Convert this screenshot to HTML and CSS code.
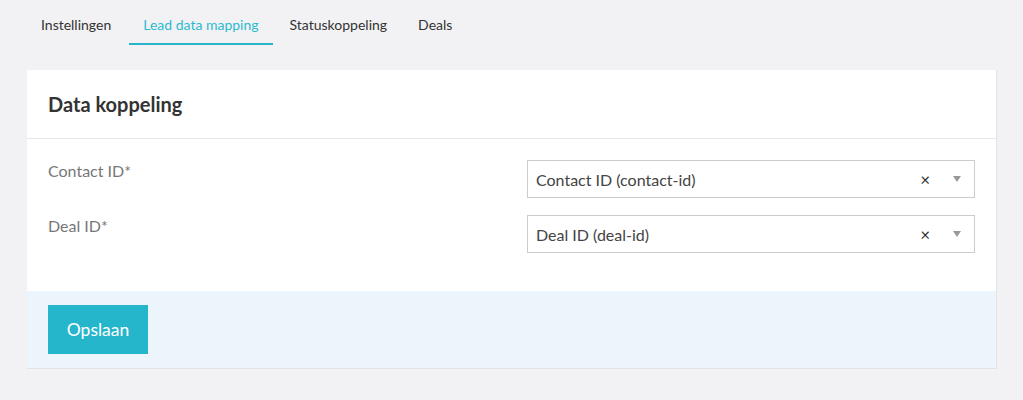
FILE: index.html
```html
<!DOCTYPE html>
<html lang="nl">
<head>
	<meta charset="UTF-8">
	<title>Lead data mapping</title>
	<link rel="stylesheet" href="styles.css">
</head>
<body>
	<ul class="tabs">
		<li class="tab">Instellingen</li>
		<li class="tab active">Lead data mapping</li>
		<li class="tab">Statuskoppeling</li>
		<li class="tab">Deals</li>
	</ul>
	<div class="card">
		<div class="card-header">
			<h2 class="card-title">Data koppeling</h2>
		</div>
		<div class="card-body">
			<div class="form-row">
				<label class="form-label">Contact ID*</label>
				<div class="select">
					<span class="select-value">Contact ID (contact-id)</span>
					<span class="select-clear">×</span>
					<span class="select-arrow"></span>
				</div>
			</div>
			<div class="form-row">
				<label class="form-label">Deal ID*</label>
				<div class="select">
					<span class="select-value">Deal ID (deal-id)</span>
					<span class="select-clear">×</span>
					<span class="select-arrow"></span>
				</div>
			</div>
		</div>
		<div class="card-footer">
			<button class="btn">Opslaan</button>
		</div>
	</div>
</body>
</html>
```

FILE: styles.css
```css
*{
	box-sizing: border-box;
	margin: 0;
	padding: 0;
}
body{
	background-color: #f2f2f4;
	font-family: Lato, "Open Sans", sans-serif;
	color: #333;
	padding: 0 26px 0 27px;
}
.tabs{
	list-style: none;
	display: flex;
	gap: 3px;
	height: 45px;
	margin-bottom: 25px;
}
.tab{
	font-size: 14px;
	color: #333;
	padding: 16px 14px 0;
	height: 45px;
	border-bottom: 2px solid transparent;
}
.tab:first-child{
	padding-right: 15px;
}
.tab.active{
	color: #2cbad0;
	border-bottom-color: #26b6cc;
}
.card{
	background: #fff;
	border-right: 1px solid #e3e3e3;
	border-bottom: 1px solid #e3e3e3;
}
.card-header{
	height: 69px;
	padding: 0 21px;
	display: flex;
	align-items: center;
	border-bottom: 1px solid #e6e6e6;
}
.card-title{
	font-size: 20px;
	font-weight: bold;
	color: #333;
}
.card-body{
	padding: 21px 21px 38px;
	display: flex;
	flex-direction: column;
	gap: 17px;
}
.form-row{
	display: grid;
	grid-template-columns: 1fr 1fr;
	column-gap: 31px;
}
.form-label{
	font-size: 16px;
	color: #777;
	padding-top: 1px;
}
.select{
	height: 38px;
	border: 1px solid #ccc;
	display: flex;
	align-items: center;
	padding: 0 13px 0 8px;
	font-size: 16px;
	color: #444;
}
.select-value{
	flex: 1;
}
.select-clear{
	font-size: 17px;
	color: #333;
	margin-right: 23px;
}
.select-arrow{
	width: 0;
	height: 0;
	border-left: 4px solid transparent;
	border-right: 4px solid transparent;
	border-top: 6px solid #999;
}
.card-footer{
	background: #edf5fc;
	padding: 14px 21px;
}
.btn{
	display: block;
	width: 100px;
	height: 49px;
	border: none;
	background: #26b6cc;
	color: #fff;
	font-family: Lato, "Open Sans", sans-serif;
	font-size: 17.5px;
}
```
